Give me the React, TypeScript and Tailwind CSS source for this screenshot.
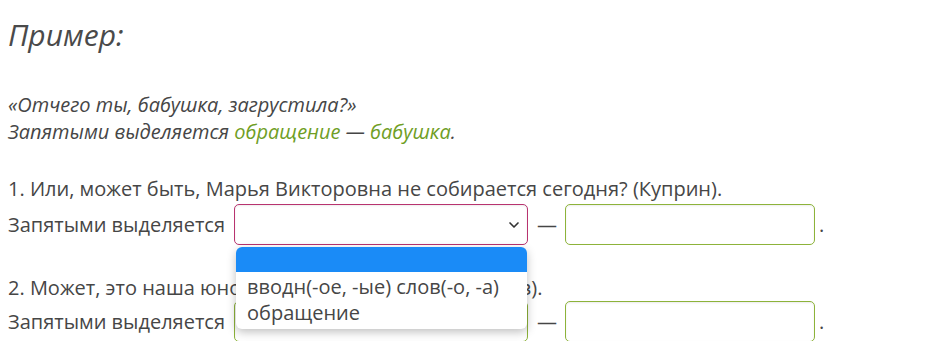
import { ChevronDown } from 'lucide-react';

const font = { fontFamily: '"Open Sans", "Noto Sans", sans-serif' };

function Row({ open, selectBorder }: { open?: boolean; selectBorder: string }) {
    return (
        <div className="flex items-center h-[41px]">
            <span>Запятыми выделяется</span>
            <div className="relative ml-[9px]">
                <div
                    className={`w-[294px] h-[41px] rounded-[5px] border ${selectBorder} bg-white shadow-[inset_0_1px_2px_rgba(0,0,0,0.08)] flex items-center justify-end pr-[5px]`}
                >
                    <ChevronDown size={16} strokeWidth={2.5} className="text-[#333]" />
                </div>
                {open && (
                    <div className="absolute left-[2px] top-[43px] w-[291px] bg-white rounded-[6px] shadow-[0_3px_10px_rgba(0,0,0,0.25)] overflow-hidden z-10 pb-[3px]">
                        <div className="h-[25px] bg-[#1a8bf7]" />
                        <div className="pt-[2px]">
                            <div className="px-[11px] leading-[26px]">вводн(-ое, -ые) слов(-о, -а)</div>
                            <div className="px-[11px] leading-[26px]">обращение</div>
                        </div>
                    </div>
                )}
            </div>
            <span className="ml-[9px] mr-[8px]">—</span>
            <div className="w-[250px] h-[41px] rounded-[5px] border border-[#8db33a] bg-white shadow-[inset_0_1px_2px_rgba(0,0,0,0.08)]" />
            <span className="ml-[4px]">.</span>
        </div>
    );
}

export default function App() {
    return (
        <div className="w-[936px] h-[341px] overflow-hidden bg-white text-[#464646] pl-[8px] pt-[17px]" style={font}>
            <h2 className="italic text-[30px] leading-[36px] text-[#4a4a4a]">Пример:</h2>

            <p className="mt-[38px] italic text-[20px] leading-[27px]">
                «Отчего ты, бабушка, загрустила?»
                <br />
                Запятыми выделяется <span className="text-[#6f9e25]">обращение</span> —{' '}
                <span className="text-[#6f9e25]">бабушка</span>.
            </p>

            <div className="mt-[30px] text-[20px] leading-[27px]">
                <div>1. Или, может быть, Марья Викторовна не собирается сегодня? (Куприн).</div>
                <div className="mt-[2px]">
                    <Row open selectBorder="border-[#b8336f]" />
                </div>
                <div className="mt-[29px]">2. Может, это наша юность вернулась к нам (А. Чехов).</div>
                <Row selectBorder="border-[#8db33a]" />
            </div>
        </div>
    );
}
